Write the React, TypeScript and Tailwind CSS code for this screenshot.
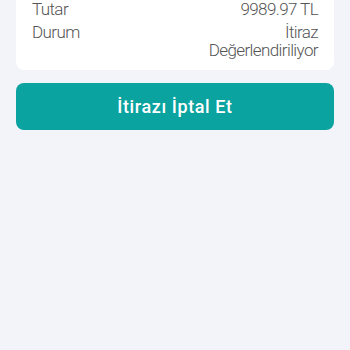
export default function App() {
  return (
    <div className="min-h-[350px] bg-[#f3f4f9] px-4 font-['Roboto',sans-serif]">
      {/* Details card, scrolled so its top sits above the viewport */}
      <div className="rounded-b-lg bg-white px-4 pb-[11px] text-[17px] font-light leading-[18px] tracking-[-0.6px] text-[#555555]">
        <div className="flex justify-between">
          <span>Tutar</span>
          <span>9989.97 TL</span>
        </div>
        <div className="mt-[5px] flex justify-between">
          <span>Durum</span>
          <div className="flex flex-col items-end">
            <span>İtiraz</span>
            <span>Değerlendiriliyor</span>
          </div>
        </div>
      </div>

      <button className="mt-[13px] flex h-[47px] w-full items-center justify-center rounded-lg bg-[#0aa39f] text-[18px] font-medium tracking-[0.6px] text-white">
        İtirazı İptal Et
      </button>
    </div>
  );
}
